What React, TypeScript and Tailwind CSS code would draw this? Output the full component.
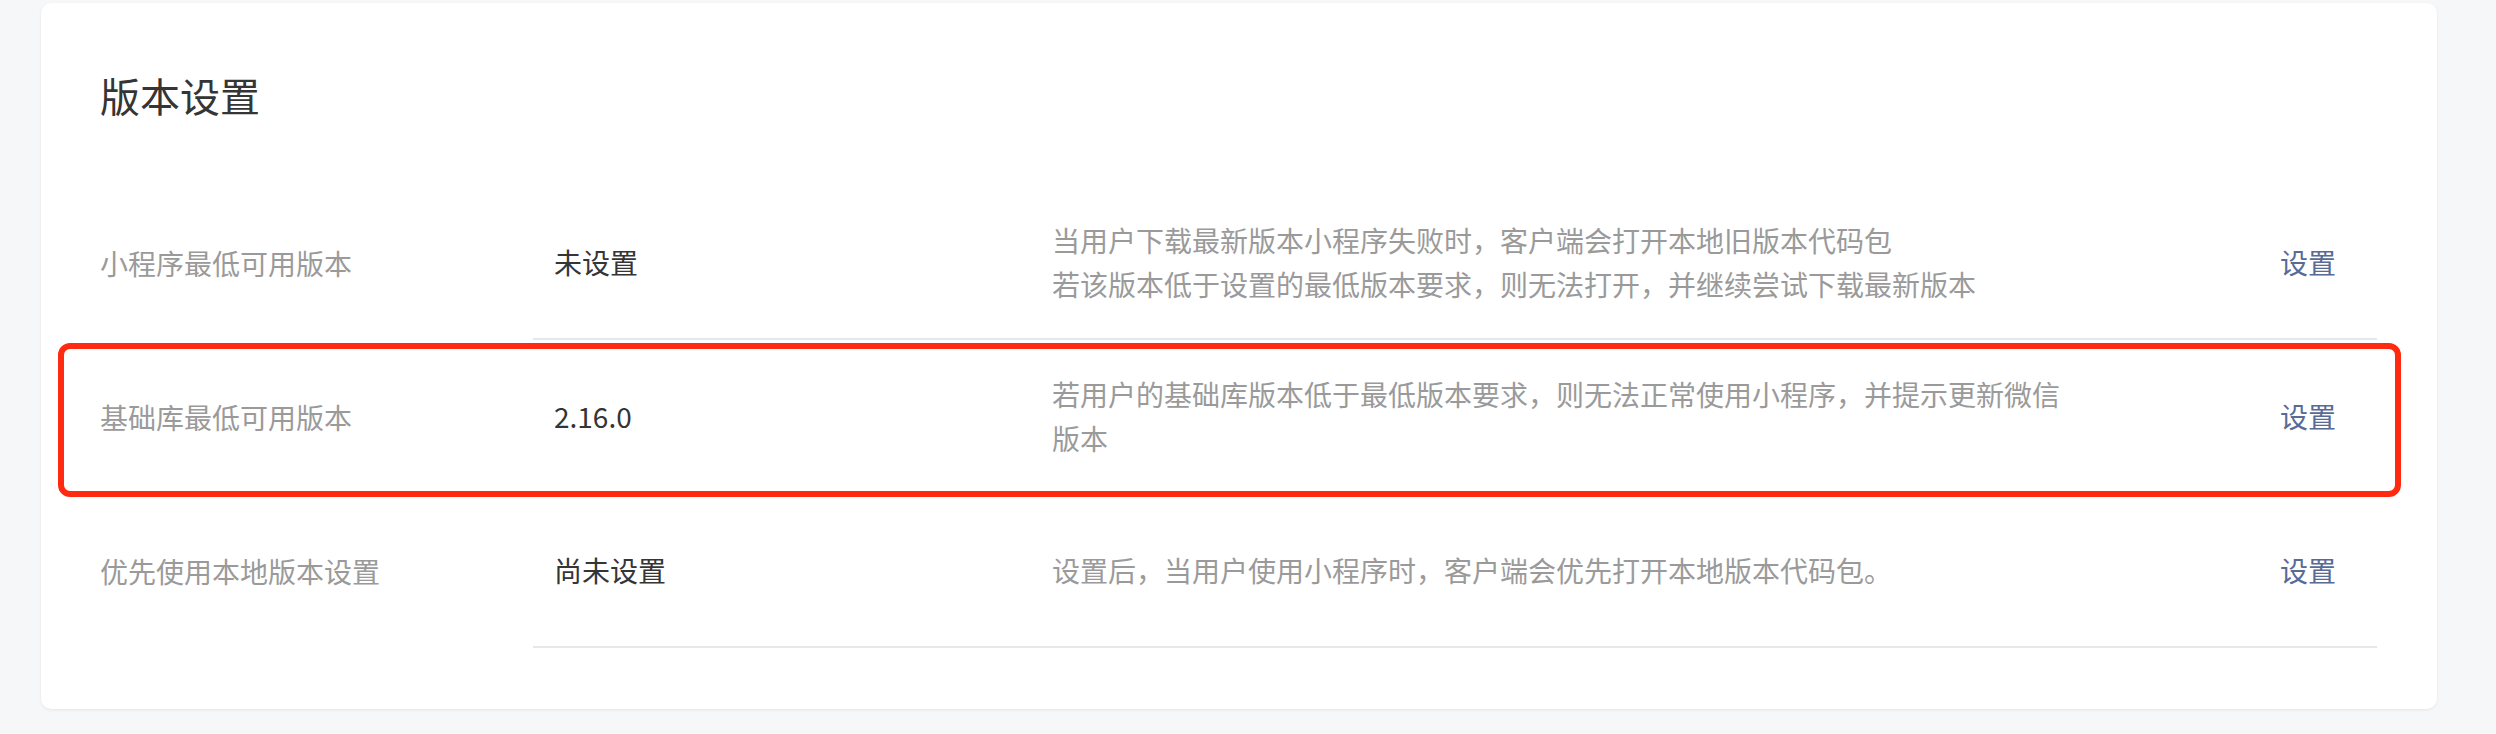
const rows = [
  {
    label: '小程序最低可用版本',
    value: '未设置',
    desc: ['当用户下载最新版本小程序失败时，客户端会打开本地旧版本代码包', '若该版本低于设置的最低版本要求，则无法打开，并继续尝试下载最新版本'],
    highlight: false,
  },
  {
    label: '基础库最低可用版本',
    value: '2.16.0',
    desc: ['若用户的基础库版本低于最低版本要求，则无法正常使用小程序，并提示更新微信版本'],
    highlight: true,
  },
  {
    label: '优先使用本地版本设置',
    value: '尚未设置',
    desc: ['设置后，当用户使用小程序时，客户端会优先打开本地版本代码包。'],
    highlight: false,
  },
];

export default function App() {
  return (
    <div
      className="min-h-screen bg-[#f6f7f9] pt-[3px] pl-[41px] pr-[59px]"
      style={{ fontFamily: '"PingFang SC", "Noto Sans CJK SC", "Noto Sans", sans-serif' }}
    >
      <div className="w-[2396px] h-[706px] bg-white rounded-[10px] shadow-[0_1px_3px_rgba(0,0,0,0.08)] pl-[59px] pr-[60px] pt-[64px]">
        <h1 className="text-[40px] leading-[56px] text-[#353535] font-normal">版本设置</h1>

        <div className="mt-[63px]">
          {rows.map((r) => (
            <div key={r.label} className="relative flex h-[154px]">
              <div className="w-[433px] flex items-center text-[28px] text-[#9a9a9a]">{r.label}</div>
              <div className="flex-1 flex items-center border-b-2 border-[#e7e7eb]">
                <div className="w-[519px] pl-[21px] text-[28px] text-[#353535]">{r.value}</div>
                <div className="flex-1 text-[28px] leading-[44px] text-[#9a9a9a]">
                  <div className="max-w-[1022px]">
                    {r.desc.map((d) => (
                      <div key={d}>{d}</div>
                    ))}
                  </div>
                </div>
                <div className="w-[97px] text-[28px] text-[#576b95]">设置</div>
              </div>
              {r.highlight && (
                <div className="absolute left-[-42px] right-[-24px] top-[3px] bottom-[-3px] border-[6px] border-[#ff2a0f] rounded-[12px] pointer-events-none" />
              )}
            </div>
          ))}
        </div>
      </div>
    </div>
  );
}
